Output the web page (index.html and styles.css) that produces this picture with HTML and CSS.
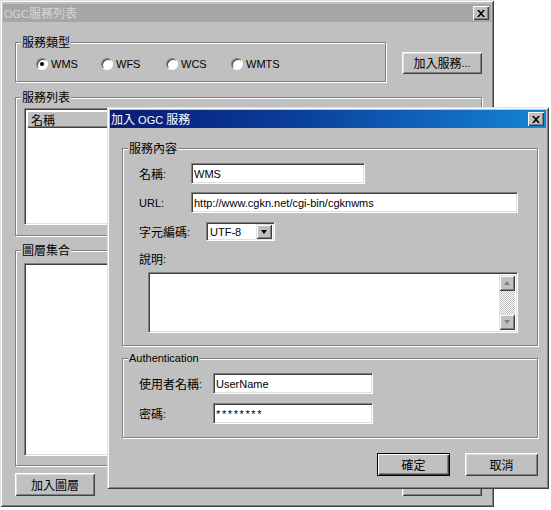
FILE: index.html
```html
<!DOCTYPE html>
<html>
<head>
<meta charset="utf-8">
<title>OGC服務列表</title>
<link rel="stylesheet" href="styles.css">
</head>
<body>
<div class="desk">
  <div class="win main">
    <div class="title inactive">
      <span class="ttl">OGC<span class="zh">服務列表</span></span>
      <span class="xbtn"><svg width="8" height="7" viewBox="0 0 8 7"><path d="M0 0h2l2 2.2L6 0h2L5 3.5 8 7H6L4 4.8 2 7H0l3-3.5z" fill="#000"/></svg></span>
    </div>
    <div class="main-body">
      <div class="row1">
        <div class="group g-type">
          <span class="legend zh">服務類型</span>
          <div class="radios">
            <span class="radio"><span class="dot on"></span>WMS</span>
            <span class="radio"><span class="dot"></span>WFS</span>
            <span class="radio"><span class="dot"></span>WCS</span>
            <span class="radio"><span class="dot"></span>WMTS</span>
          </div>
        </div>
        <div class="btn btn-svc"><span class="zh">加入服務</span>...</div>
      </div>
      <div class="group g-list">
        <span class="legend zh">服務列表</span>
        <div class="list-row">
          <div class="field list">
            <div class="lv-head"><span class="hcell zh">名稱</span><span class="hrest"></span></div>
          </div>
          <div class="btn btn-small"></div>
        </div>
      </div>
      <div class="group g-layers">
        <span class="legend zh">圖層集合</span>
        <div class="field list2"></div>
      </div>
      <div class="row-bottom">
        <div class="btn btn-layer zh">加入圖層</div>
        <div class="btn btn-hidden"></div>
      </div>
    </div>
  </div>

  <div class="win dlg">
    <div class="title active">
      <span class="ttl"><span class="zh">加入</span>&nbsp;OGC&nbsp;<span class="zh">服務</span></span>
      <span class="xbtn"><svg width="8" height="7" viewBox="0 0 8 7"><path d="M0 0h2l2 2.2L6 0h2L5 3.5 8 7H6L4 4.8 2 7H0l3-3.5z" fill="#000"/></svg></span>
    </div>
    <div class="dlg-body">
      <div class="group g-info">
        <span class="legend zh">服務內容</span>
        <div class="frow">
          <span class="lab w52"><span class="zh">名稱</span>:</span>
          <div class="field in w174">WMS</div>
        </div>
        <div class="frow r2">
          <span class="lab w52">URL:</span>
          <div class="field in w327">http://www.cgkn.net/cgi-bin/cgknwms</div>
        </div>
        <div class="frow r3">
          <span class="lab w67"><span class="zh">字元編碼</span>:</span>
          <div class="field combo">
            <span class="combo-val">UTF-8</span>
            <span class="combo-btn"><span class="tri-down"></span></span>
          </div>
        </div>
        <div class="frow r4">
          <span class="lab"><span class="zh">說明</span>:</span>
        </div>
        <div class="field memo">
          <div class="memo-text"></div>
          <div class="vscroll">
            <span class="sb-btn"><span class="tri-up grey"></span></span>
            <span class="sb-track"></span>
            <span class="sb-btn"><span class="tri-down grey"></span></span>
          </div>
        </div>
      </div>
      <div class="group g-auth">
        <span class="legend">Authentication</span>
        <div class="frow">
          <span class="lab w74"><span class="zh">使用者名稱</span>:</span>
          <div class="field in w160">UserName</div>
        </div>
        <div class="frow r2b">
          <span class="lab w74"><span class="zh">密碼</span>:</span>
          <div class="field in w160 pw">********</div>
        </div>
      </div>
      <div class="btn-row">
        <div class="btn btn-dlg default zh">確定</div>
        <div class="btn btn-dlg zh">取消</div>
      </div>
    </div>
  </div>
</div>
</body>
</html>
```
FILE: styles.css
```css
* { box-sizing: border-box; margin: 0; padding: 0; }
html, body { background: #fff; }
body {
  margin: 0;
  font: 11px/14px "Liberation Sans", "Noto Sans CJK TC", sans-serif;
  color: #000;
}
.zh { font-family: "Noto Sans CJK TC", "Liberation Sans", sans-serif; font-size: 12px; }

.desk { position: relative; width: 551px; height: 510px; }

.win {
  background: #c0c0c0;
  padding: 3px;
  display: flex;
  flex-direction: column;
  box-shadow: inset 1px 1px 0 #dfdfdf, inset -1px -1px 0 #404040,
              inset 2px 2px 0 #fff, inset -2px -2px 0 #808080;
}
.main { width: 494px; height: 507px; padding: 4px 3px 3px 3px; }

.title {
  height: 18px;
  flex: none;
  display: flex;
  align-items: center;
  justify-content: space-between;
  padding: 0 2px 0 1px;
  white-space: nowrap;
}
.inactive { background: #a6a6a6; color: #d6d6d6; }
.active { background: linear-gradient(90deg, #071c74 0%, #0a3c9a 40%, #1484d4 100%); color: #fff; }
.ttl { display: block; line-height: 14px; }
.ttl .zh { font-size: 12px; }
.xbtn {
  width: 16px; height: 14px;
  background: #c0c0c0;
  display: flex; align-items: center; justify-content: center;
  box-shadow: inset 1px 1px 0 #fff, inset -1px -1px 0 #404040, inset -2px -2px 0 #808080;
}
.xbtn svg { display: block; margin-left: -1px; }

/* groups */
.group {
  position: relative;
  border: 1px solid #808080;
  box-shadow: 1px 1px 0 #fff, inset 1px 1px 0 #fff;
  flex: none;
}
.legend {
  position: absolute;
  top: -8px;
  left: 5px;
  padding: 0 1px;
  background: #c0c0c0;
  line-height: 14px;
  white-space: nowrap;
}

/* raised button */
.btn {
  background: #c0c0c0;
  display: flex; align-items: center; justify-content: center;
  box-shadow: inset 1px 1px 0 #fff, inset -1px -1px 0 #404040,
              inset 2px 2px 0 #dfdfdf, inset -2px -2px 0 #808080;
  flex: none;
  white-space: nowrap;
}
.btn.default {
  border: 1px solid #000;
  box-shadow: inset 1px 1px 0 #fff, inset -1px -1px 0 #404040,
              inset -2px -2px 0 #808080;
}

/* sunken field */
.field {
  background: #fff;
  border: 1px solid;
  border-color: #808080 #fff #fff #808080;
  box-shadow: inset 1px 1px 0 #404040, inset -1px -1px 0 #dfdfdf;
  flex: none;
}

/* main window body */
.main-body {
  flex: 1;
  display: flex;
  flex-direction: column;
  padding: 20px 9px 0 12px;
}
.row1 { display: flex; justify-content: space-between; height: 41px; flex: none; }
.g-type { width: 371px; height: 40px; padding: 14px 0 0 20px; }
.radios { display: flex; align-items: center; height: 14px; }
.radio { width: 65px; display: flex; align-items: center; flex: none; }
.dot {
  width: 12px; height: 12px;
  border-radius: 50%;
  background: #fff;
  border: 1px solid;
  border-color: #808080 #fff #fff #808080;
  box-shadow: inset 1px 1px 0 #404040;
  margin-right: 3px;
  display: flex; align-items: center; justify-content: center;
}
.dot.on::after {
  content: "";
  width: 4px; height: 4px;
  border-radius: 50%;
  background: #000;
}
.btn-svc { width: 80px; height: 22px; margin-top: 10px; }

.g-list { margin-top: 14px; height: 139px; padding: 10px 0 0 8px; }
.list-row { display: flex; align-items: flex-start; }
.list { width: 422px; height: 117px; padding: 2px; }
.lv-head { display: flex; height: 17px; }
.hcell, .hrest {
  background: #c0c0c0;
  box-shadow: inset 1px 1px 0 #fff, inset -1px -1px 0 #404040, inset -2px -2px 0 #808080;
  height: 17px;
}
.hcell { width: 210px; padding: 0 0 0 4px; display: flex; align-items: center; }
.hrest { flex: 1; }
.btn-small { width: 24px; height: 22px; margin: -1px 0 0 4px; }

.g-layers { margin-top: 14px; height: 216px; padding: 12px 0 0 8px; }
.list2 { width: 448px; height: 193px; }

.row-bottom { display: flex; justify-content: space-between; margin-top: 7px; }
.btn-layer { width: 80px; height: 23px; }
.btn-hidden { width: 80px; height: 23px; }

/* dialog window */
.dlg {
  position: absolute;
  left: 107px; top: 107px;
  width: 442px; height: 382px;
}
.dlg-body { flex: 1; display: flex; flex-direction: column; padding: 20px 8px 0 12px; }
.g-info { width: 416px; height: 198px; padding: 14px 0 0 16px; }
.frow { display: flex; align-items: center; height: 21px; }
.lab { flex: none; white-space: nowrap; display: flex; align-items: center; }
.w52 { width: 52px; }
.w67 { width: 67px; }
.w74 { width: 74px; }
.in { height: 21px; padding: 0 2px; display: flex; align-items: center; white-space: nowrap; overflow: hidden; }
.w174 { width: 174px; }
.w327 { width: 327px; }
.w160 { width: 160px; }
.pw { letter-spacing: 1.6px; font-size: 11px; }
.r2 { margin-top: 8px; }
.r3 { margin-top: 9px; height: 19px; }
.r4 { margin-top: 11px; height: 14px; }

.combo { width: 69px; height: 19px; display: flex; align-items: center; justify-content: space-between; padding: 2px; }
.combo-val { padding-left: 1px; }
.combo-btn {
  width: 16px; height: 15px;
  background: #c0c0c0;
  display: flex; align-items: center; justify-content: center;
  box-shadow: inset 1px 1px 0 #dfdfdf, inset -1px -1px 0 #404040,
              inset 2px 2px 0 #fff, inset -2px -2px 0 #808080;
}
.tri-down { width: 0; height: 0; border-left: 3.5px solid transparent; border-right: 3.5px solid transparent; border-top: 4px solid #000; }
.tri-up { width: 0; height: 0; border-left: 3.5px solid transparent; border-right: 3.5px solid transparent; border-bottom: 4px solid #000; }
.tri-down.grey { border-top-color: #808080; }
.tri-up.grey { border-bottom-color: #808080; }

.memo {
  margin: 6px 0 0 9px;
  width: 370px; height: 61px;
  padding: 2px;
  display: flex;
}
.memo-text { flex: 1; }
.vscroll { width: 16px; display: flex; flex-direction: column; }
.sb-btn {
  width: 16px; height: 16px; flex: none;
  background: #c0c0c0;
  display: flex; align-items: center; justify-content: center;
  box-shadow: inset 1px 1px 0 #dfdfdf, inset -1px -1px 0 #404040,
              inset 2px 2px 0 #fff, inset -2px -2px 0 #808080;
}
.sb-track {
  flex: 1;
  background: repeating-conic-gradient(#fff 0 25%, #c0c0c0 0 50%) 0 0 / 2px 2px;
}

.g-auth { margin-top: 12px; width: 416px; height: 80px; padding: 14px 0 0 16px; }
.r2b { margin-top: 9px; }

.btn-row { display: flex; justify-content: flex-end; gap: 15px; width: 416px; margin-top: 15px; }
.btn-dlg { width: 73px; height: 23px; }
```
